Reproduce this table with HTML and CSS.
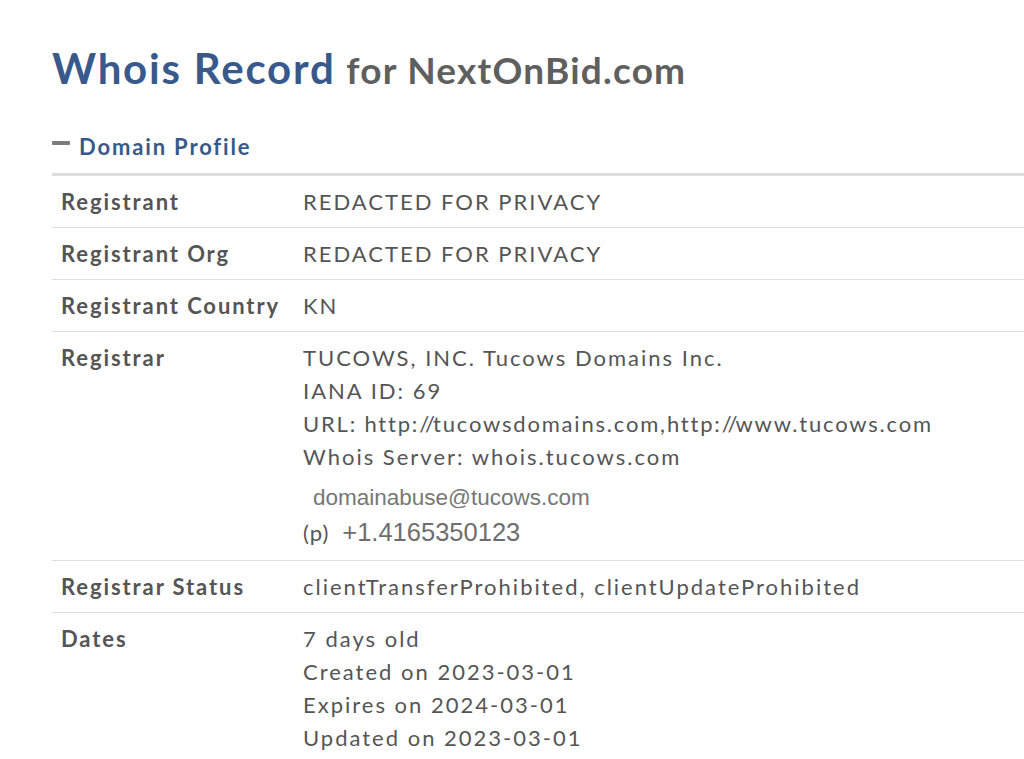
FILE: index.html
```html
<!DOCTYPE html>
<html lang="en">
<head>
<meta charset="utf-8">
<title>Whois Record for NextOnBid.com</title>
<link rel="stylesheet" href="styles.css">
</head>
<body>
<main class="page">
  <h1 class="title"><span class="title-main">Whois Record</span> <span class="title-sub">for NextOnBid.com</span></h1>
  <div class="section-head"><span class="collapse-dash"></span><span class="section-name">Domain Profile</span></div>
  <div class="profile">
    <div class="row">
      <div class="label">Registrant</div>
      <div class="value">REDACTED FOR PRIVACY</div>
    </div>
    <div class="row">
      <div class="label">Registrant Org</div>
      <div class="value">REDACTED FOR PRIVACY</div>
    </div>
    <div class="row">
      <div class="label">Registrant Country</div>
      <div class="value">KN</div>
    </div>
    <div class="row">
      <div class="label">Registrar</div>
      <div class="value">
        <div>TUCOWS, INC. Tucows Domains Inc.</div>
        <div>IANA ID: 69</div>
        <div class="url-line">URL: http:<span class="slash-first">/</span><span class="slash-second">/</span>tucowsdomains.com,http:<span class="slash-first">/</span><span class="slash-second">/</span>www.tucows.com</div>
        <div>Whois Server: whois.tucows.com</div>
        <div class="contact-email">domainabuse@tucows.com</div>
        <div class="contact-phone"><span class="phone-tag">(p)</span><span class="phone-num">+1.4165350123</span></div>
      </div>
    </div>
    <div class="row">
      <div class="label">Registrar Status</div>
      <div class="value">clientTransferProhibited, clientUpdateProhibited</div>
    </div>
    <div class="row">
      <div class="label">Dates</div>
      <div class="value">
        <div>7 days old</div>
        <div>Created on 2023-03-01</div>
        <div>Expires on 2024-03-01</div>
        <div>Updated on 2023-03-01</div>
      </div>
    </div>
  </div>
</main>
</body>
</html>
```

FILE: styles.css
```css
html, body {
  margin: 0;
  padding: 0;
  background: #ffffff;
  overflow: hidden;
}

body {
  font-family: Lato, "Open Sans", sans-serif;
  color: #555555;
}

.page {
  padding: 43px 0 0 52px;
}

.title {
  margin: 0;
  font-weight: 700;
  line-height: 50px;
  white-space: nowrap;
}

.title-main {
  font-size: 42px;
  color: #38598a;
  letter-spacing: 1.8px;
}

.title-sub {
  margin-left: 3px;
  font-size: 37px;
  color: #5f5f5f;
  letter-spacing: 1.2px;
}

.section-head {
  display: flex;
  align-items: center;
  margin-top: 34px;
  height: 30px;
}

.collapse-dash {
  width: 18px;
  height: 4px;
  border-radius: 1px;
  background: #7c7c7c;
  margin-right: 9px;
  margin-top: -6px;
}

.section-name {
  font-size: 22px;
  font-weight: 700;
  color: #38598a;
  letter-spacing: 1.85px;
}

.profile {
  margin-top: 12px;
  border-top: 3px solid #dddddd;
}

.row {
  display: grid;
  grid-template-columns: 251px 1fr;
  border-bottom: 1px solid #dedede;
  padding: 9px 0;
  font-size: 22px;
  line-height: 33px;
  letter-spacing: 2px;
}

.label {
  padding-left: 9px;
  font-weight: 700;
  color: #555555;
  letter-spacing: 1.9px;
}

.value {
  color: #555555;
}

.url-line {
  letter-spacing: 1.8px;
}

.slash-first {
  letter-spacing: -4px;
}

.slash-second {
  letter-spacing: -2px;
}

.contact-email {
  margin-top: 9px;
  padding-left: 10px;
  height: 32px;
  line-height: 32px;
  font-family: "Liberation Sans", Arial, sans-serif;
  font-size: 22.5px;
  letter-spacing: 0;
  color: #777777;
}

.contact-phone {
  height: 37px;
  line-height: 36px;
}

.phone-tag {
  color: #555555;
  letter-spacing: 1px;
}

.phone-num {
  margin-left: 13px;
  font-family: "Liberation Sans", Arial, sans-serif;
  font-size: 25.5px;
  letter-spacing: 0;
  color: #6e6e6e;
}
```
